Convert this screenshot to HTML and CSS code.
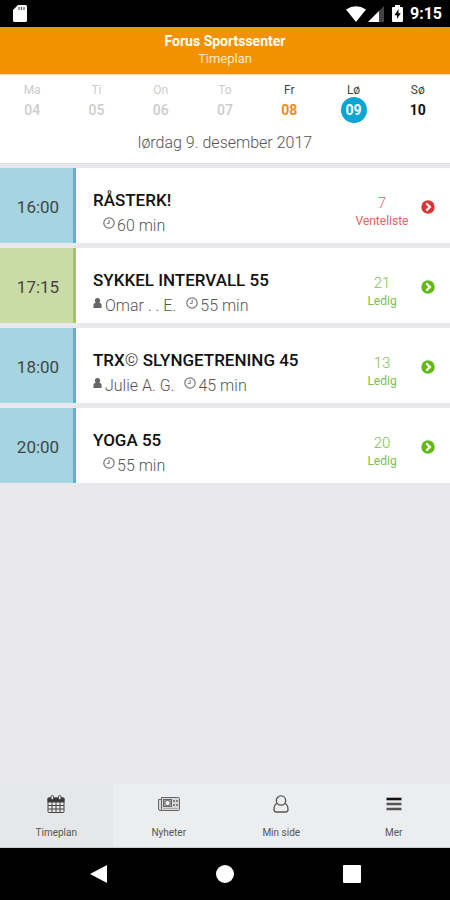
FILE: index.html
```
<!DOCTYPE html>
<html lang="no">
<head>
  <meta charset="UTF-8">
  <title>Forus Sportssenter - Timeplan</title>
  <meta name="viewport" content="width=device-width, initial-scale=1.0">
  <link rel="stylesheet" href="styles.css">
</head>
<body>
  <!-- shared icons -->
  <svg class="sprite" aria-hidden="true">
    <symbol id="clock" viewBox="0 0 12 12">
      <circle cx="6" cy="6" r="5.2" fill="none" stroke="currentColor" stroke-width="1.2"/>
      <path d="M6.200 2.800v3.600H3.800" fill="none" stroke="currentColor" stroke-width="1"/>
    </symbol>
    <symbol id="person" viewBox="0 0 10 12">
      <circle cx="5" cy="3.400" r="2.900" fill="currentColor"/>
      <path d="M.5 11.500V8.500Q.5 6 2.500 6h5q2 0 2 2.500v3z" fill="currentColor"/>
    </symbol>
    <symbol id="arrow" viewBox="0 0 14 14">
      <circle cx="7" cy="7" r="6.700" fill="currentColor"/>
      <path d="M5.300 3.400L8.900 7l-3.600 3.600" fill="none" stroke="#fff" stroke-width="2.200"/>
    </symbol>
  </svg>

  <div class="statusbar">
    <svg width="14" height="17" viewBox="0 0 14 17">
      <path d="M5 0h7.500Q14 0 14 1.500v14q0 1.500-1.500 1.500h-11Q0 17 0 15.500V5z" fill="#fff"/>
      <path d="M6 2v3M8.500 2v3M11 2v3" stroke="#555" stroke-width="1.200"/>
    </svg>
    <div class="status-icons">
      <svg width="20" height="16" viewBox="0 0 20 16"><path d="M0 3.500Q10-3 20 3.500L10 16z" fill="#fff"/></svg>
      <svg width="16" height="16" viewBox="0 0 16 16">
        <path d="M16 0v16H0z" fill="#444"/>
        <path d="M11 5v11H0z" fill="#fff"/>
      </svg>
      <svg class="battery" width="11" height="17" viewBox="0 0 11 17">
        <path d="M3 0h5v2h2q1 0 1 1v13q0 1-1 1H1q-1 0-1-1V3q0-1 1-1h2z" fill="#fff"/>
        <path d="M6.500 4L2.500 10.200H5V14l3.700-5.800H6.500z" fill="#000"/>
      </svg>
      <span>9:15</span>
    </div>
  </div>

  <header class="header">
    <h1>Forus Sportssenter</h1>
    <p>Timeplan</p>
  </header>

  <section class="calendar">
    <div class="week">
      <button class="day past"><span>Ma</span><b>04</b></button>
      <button class="day past"><span>Ti</span><b>05</b></button>
      <button class="day past"><span>On</span><b>06</b></button>
      <button class="day past"><span>To</span><b>07</b></button>
      <button class="day today"><span>Fr</span><b>08</b></button>
      <button class="day selected"><span>Lø</span><b>09</b></button>
      <button class="day"><span>Sø</span><b>10</b></button>
    </div>
    <p class="date">lørdag 9. desember 2017</p>
  </section>

  <main class="classes">
    <a href="#" class="class-row">
      <time class="time">16:00</time>
      <div class="info">
        <h2>RÅSTERK!</h2>
        <p><span class="duration"><svg class="clock"><use href="#clock"/></svg>60 min</span></p>
      </div>
      <div class="spots full"><b>7</b><span>Venteliste</span></div>
      <svg class="arrow full"><use href="#arrow"/></svg>
    </a>
    <a href="#" class="class-row">
      <time class="time green">17:15</time>
      <div class="info">
        <h2>SYKKEL INTERVALL 55</h2>
        <p><svg class="person"><use href="#person"/></svg>Omar . . E.<span class="duration"><svg class="clock"><use href="#clock"/></svg>55 min</span></p>
      </div>
      <div class="spots"><b>21</b><span>Ledig</span></div>
      <svg class="arrow"><use href="#arrow"/></svg>
    </a>
    <a href="#" class="class-row">
      <time class="time">18:00</time>
      <div class="info">
        <h2>TRX<span class="copy">©</span> SLYNGETRENING 45</h2>
        <p><svg class="person"><use href="#person"/></svg>Julie A. G.<span class="duration"><svg class="clock"><use href="#clock"/></svg>45 min</span></p>
      </div>
      <div class="spots"><b>13</b><span>Ledig</span></div>
      <svg class="arrow"><use href="#arrow"/></svg>
    </a>
    <a href="#" class="class-row">
      <time class="time">20:00</time>
      <div class="info">
        <h2>YOGA 55</h2>
        <p><span class="duration"><svg class="clock"><use href="#clock"/></svg>55 min</span></p>
      </div>
      <div class="spots"><b>20</b><span>Ledig</span></div>
      <svg class="arrow"><use href="#arrow"/></svg>
    </a>
  </main>

  <nav class="tabs">
    <a href="#" class="active">
      <svg width="18" height="18" viewBox="0 0 18 18" fill="none" stroke="#444">
        <path d="M1 3h16v4H1z" fill="#333"/>
        <rect x="1" y="3" width="16" height="14.500" rx="1"/>
        <path d="M1 10.500h16M1 14h16M5 7v10M9 7v10M13 7v10"/>
        <rect x="4" y=".5" width="2.500" height="4" rx="1" fill="#e7e8ea"/>
        <rect x="11.500" y=".5" width="2.500" height="4" rx="1" fill="#e7e8ea"/>
      </svg>
      Timeplan
    </a>
    <a href="#">
      <svg width="22" height="18" viewBox="0 0 22 18" fill="none" stroke="#666">
        <path d="M3.500 2.500h17q1 0 1 1v11q0 1-1 1h-18q-2 0-2-1.500V4.500h3z" fill="#d6d7d9"/>
        <path d="M3.500 2.500v11q0 1.500-1 2"/>
        <rect x="5.500" y="4.500" width="8" height="7" fill="#aaa"/>
        <circle cx="9.500" cy="8" r="2.700" fill="#ecedef"/>
        <path d="M15 6h2M18 6h2M15 10h2M18 10h2" stroke-width="1.500"/>
        <path d="M5 13.500h15" stroke="#aaa"/>
      </svg>
      Nyheter
    </a>
    <a href="#">
      <svg width="16" height="18" viewBox="0 0 16 18" fill="none" stroke="#555" stroke-width="1.300">
        <circle cx="8" cy="5.500" r="4.700"/>
        <path d="M4.200 8.500Q1 9.500 1 14.500q0 2.500 2.500 2.500h9q2.500 0 2.500-2.500 0-5-3.200-6"/>
      </svg>
      Min side
    </a>
    <a href="#">
      <svg width="16" height="18" viewBox="0 0 16 18" stroke="#333" stroke-width="2.600">
        <path d="M.5 4h15" stroke="#111"/>
        <path d="M.5 9h15M.5 14h15" stroke="#555"/>
      </svg>
      Mer
    </a>
  </nav>

  <div class="navbar">
    <button aria-label="Tilbake"><svg width="18" height="18"><path d="M18 0v18L1 9z" fill="#fff"/></svg></button>
    <button aria-label="Hjem"><svg width="18" height="18"><circle cx="9" cy="9" r="9" fill="#fff"/></svg></button>
    <button aria-label="Oversikt"><svg width="18" height="18"><rect width="18" height="18" rx="1" fill="#fff"/></svg></button>
  </div>
</body>
</html>
```
FILE: styles.css
```
* {
  box-sizing: border-box;
}
body {
  display: flex;
  flex-direction: column;
  min-height: 100vh;
  margin: 0;
  font-family: Roboto, sans-serif;
  background: #e8e8ed;
  color: #111;
}
h1, h2, p {
  margin: 0;
}
a {
  color: inherit;
  text-decoration: none;
}
button {
  padding: 0;
  border: 0;
  background: none;
  font-family: inherit;
  color: inherit;
  cursor: pointer;
}
.sprite {
  display: none;
}

/* top */
.statusbar {
  display: flex;
  align-items: center;
  justify-content: space-between;
  height: 27px;
  padding: 0 8px 0 13px;
  background: #000;
  color: #fff;
}
.status-icons {
  display: flex;
  align-items: center;
  gap: 2px;
  font-size: 16px;
  font-weight: 700;
}
.battery {
  margin: 0 5px 0 6px;
}
.header {
  height: 48px;
  padding-top: 5px;
  background: #f39200;
  border-bottom: 1px solid #fbdcb0;
  color: #fff;
  text-align: center;
}
.header h1 {
  font-size: 14px;
  line-height: 18px;
  font-weight: 700;
}
.header p {
  font-size: 13px;
  line-height: 18px;
  color: #ffeacb;
}

/* week picker */
.calendar {
  background: #fff;
  border-bottom: 1px solid #dcdce2;
}
.week {
  display: flex;
  padding-top: 8px;
}
.day {
  display: flex;
  flex: 1;
  flex-direction: column;
  align-items: center;
  font-size: 12px;
  line-height: 14px;
  color: #444;
}
.day b {
  width: 26px;
  border-radius: 50%;
  font-size: 14px;
  line-height: 26px;
  font-weight: 700;
  color: #111;
}
.day.past, .day.past b {
  color: #ccc;
}
.day.past b {
  font-weight: 500;
}
.day.today b {
  color: #f0891a;
}
.day.selected b {
  background: #0ba5d4;
  color: #fff;
}
.date {
  padding: 9px 0;
  font-size: 16px;
  line-height: 22px;
  font-weight: 300;
  color: #555;
  text-align: center;
}

/* class list */
.classes {
  display: flex;
  flex: 1;
  flex-direction: column;
  gap: 5px;
  padding-top: 4px;
}
.class-row {
  display: flex;
  align-items: center;
  height: 75px;
  padding-right: 15px;
  background: #fff;
}
.time {
  display: flex;
  align-items: center;
  justify-content: center;
  width: 76px;
  height: 100%;
  padding: 3px 0 0 3px;
  background: #a5d5e2;
  border-right: 3px solid #5bb4cf;
  font-size: 17px;
  color: #444;
}
.time.green {
  background: #c9dca5;
  border-color: #9fca58;
}
.info {
  flex: 1;
  padding: 16px 0 0 17px;
}
.info h2 {
  font-size: 17px;
  line-height: 24px;
  font-weight: 500;
}
.info .copy {
  font-weight: 300;
}
.info p {
  font-size: 16px;
  line-height: 28px;
  font-weight: 300;
  color: #555;
}
.duration {
  margin-left: 10px;
}
.clock {
  width: 12px;
  height: 12px;
  margin-right: 2px;
  vertical-align: 2px;
  color: #777;
}
.person {
  width: 9px;
  height: 12px;
  margin-right: 3px;
  vertical-align: 2px;
  color: #666;
}
.spots {
  display: flex;
  flex-direction: column;
  align-items: center;
  width: 60px;
  padding-top: 13px;
  margin-right: 9px;
  font-size: 12px;
  line-height: 18px;
  color: #7cc050;
}
.spots b {
  font-size: 15px;
  font-weight: 300;
}
.arrow {
  width: 14px;
  height: 14px;
  margin-top: 3px;
  color: #62b71b;
}
.spots.full {
  color: #df6060;
}
.arrow.full {
  color: #db3434;
}

/* bottom */
.tabs {
  display: flex;
  height: 64px;
  background: #ecedef;
  border-bottom: 1px solid #ccc;
}
.tabs a {
  display: flex;
  flex: 1;
  flex-direction: column;
  align-items: center;
  gap: 13px;
  padding-top: 11px;
  font-size: 10px;
  line-height: 14px;
  color: #555;
}
.tabs .active {
  background: #e6e7e9;
}
.navbar {
  display: flex;
  align-items: center;
  justify-content: space-between;
  height: 52px;
  padding: 0 89px;
  background: #000;
}
.navbar svg {
  display: block;
}
```
